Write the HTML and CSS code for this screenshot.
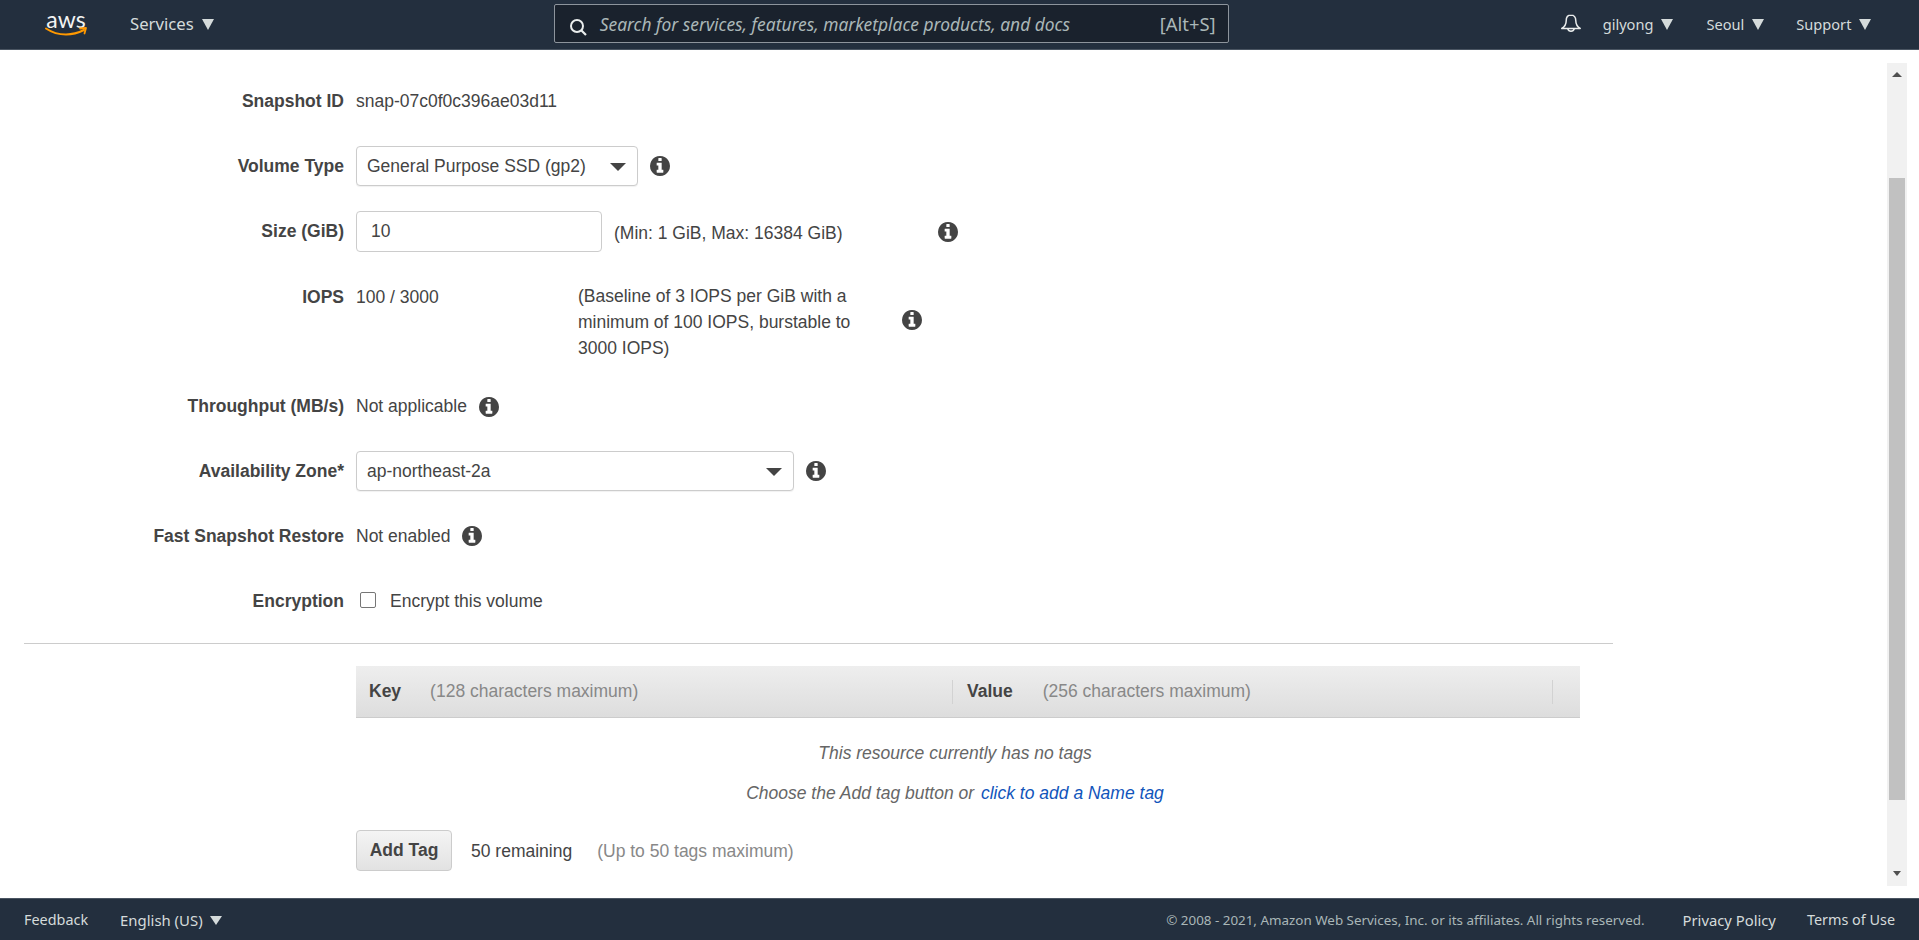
FILE: index.html
```html
<!DOCTYPE html>
<html lang="en">
<head>
<meta charset="utf-8">
<title>Create Volume</title>
<link rel="stylesheet" href="styles.css">
</head>
<body>
<svg class="defs" width="0" height="0" aria-hidden="true"><symbol id="info" viewBox="0 0 1536 1536"><path d="M1024 1248v-160q0-14-9-23t-23-9h-96v-512q0-14-9-23t-23-9h-320q-14 0-23 9t-9 23v160q0 14 9 23t23 9h96v320h-96q-14 0-23 9t-9 23v160q0 14 9 23t23 9h448q14 0 23-9t9-23zm-128-896v-160q0-14-9-23t-23-9h-192q-14 0-23 9t-9 23v160q0 14 9 23t23 9h192q14 0 23-9t9-23zm640 416q0 209-103 385.5t-279.5 279.5-385.5 103-385.5-103-279.5-279.5-103-385.5 103-385.5 279.5-279.5 385.5-103 385.5 103 279.5 279.5 103 385.5z"/></symbol></svg>
<div class="page">
  <header class="topbar">
    <div class="logo">
      <span class="logo-text">aws</span>
      <svg class="smile" viewBox="0 0 42 9" width="42" height="9"><path d="M1 1.500C7 5.500 13 7.500 21 7.500 27 7.500 33 6 39 3" fill="none" stroke="#f90" stroke-width="2" stroke-linecap="round"/><path d="M35 1.500L41 1 39.500 6.500" fill="none" stroke="#f90" stroke-width="1.800" stroke-linecap="round" stroke-linejoin="round"/></svg>
    </div>
    <div class="nav-item services">Services<i class="caret"></i></div>
    <div class="search">
      <svg class="search-icon" viewBox="0 0 18 18" width="18" height="18"><circle cx="8" cy="8" r="6" fill="none" stroke="#eaeded" stroke-width="2"/><path d="M12.500 12.500L17 17" stroke="#eaeded" stroke-width="2.200"/></svg>
      <span class="search-text">Search for services, features, marketplace products, and docs</span>
      <span class="search-key">[Alt+S]</span>
    </div>
    <svg class="bell" viewBox="0 0 20 20" width="20" height="20"><path d="M10 1C6.800 1 5.200 3.500 5.200 6.700c0 3.400-1.500 6-4.400 7.800h18.400c-2.900-1.800-4.400-4.400-4.400-7.800C14.800 3.500 13.200 1 10 1z" fill="none" stroke="#eaeded" stroke-width="1.500" stroke-linejoin="round"/><path d="M6.800 14.800a3.300 3.300 0 0 0 6.400 0" fill="none" stroke="#eaeded" stroke-width="1.500"/></svg>
    <div class="nav-item user">gilyong<i class="caret"></i></div>
    <div class="nav-item region">Seoul<i class="caret"></i></div>
    <div class="nav-item support">Support<i class="caret"></i></div>
  </header>

  <main class="main">
    <div class="content">
      <div class="row row-a">
        <div class="label">Snapshot ID</div>
        <div class="value">snap-07c0f0c396ae03d11</div>
      </div>
      <div class="row">
        <div class="label">Volume Type</div>
        <div class="select select-type"><span>General Purpose SSD (gp2)</span><i class="select-caret"></i></div>
        <svg class="info info-type"><use href="#info"/></svg>
      </div>
      <div class="row row-size">
        <div class="label">Size (GiB)</div>
        <div class="input">10</div>
        <div class="value size-note">(Min: 1 GiB, Max: 16384 GiB)</div>
        <svg class="info info-size"><use href="#info"/></svg>
      </div>
      <div class="row row-iops">
        <div class="label">IOPS</div>
        <div class="value iops-val">100 / 3000</div>
        <div class="value iops-note">(Baseline of 3 IOPS per GiB with a minimum of 100 IOPS, burstable to 3000 IOPS)</div>
        <svg class="info info-iops"><use href="#info"/></svg>
      </div>
      <div class="row row-thr">
        <div class="label">Throughput (MB/s)</div>
        <div class="value">Not applicable</div>
        <svg class="info info-near"><use href="#info"/></svg>
      </div>
      <div class="row row-az">
        <div class="label">Availability Zone*</div>
        <div class="select select-az"><span>ap-northeast-2a</span><i class="select-caret"></i></div>
        <svg class="info info-type"><use href="#info"/></svg>
      </div>
      <div class="row row-fast">
        <div class="label">Fast Snapshot Restore</div>
        <div class="value">Not enabled</div>
        <svg class="info info-near"><use href="#info"/></svg>
      </div>
      <div class="row row-enc">
        <div class="label">Encryption</div>
        <i class="checkbox"></i>
        <div class="value">Encrypt this volume</div>
      </div>
      <hr class="divider">
      <div class="tags">
        <div class="tag-head">
          <div class="tag-col tag-key"><b>Key</b><span>(128 characters maximum)</span></div>
          <div class="tag-col tag-value"><b>Value</b><span>(256 characters maximum)</span></div>
        </div>
        <p class="empty empty-1">This resource currently has no tags</p>
        <p class="empty empty-2">Choose the Add tag button or <a href="#">click to add a Name tag</a></p>
        <div class="tag-actions">
          <button class="add-tag" type="button">Add Tag</button>
          <span class="remaining">50 remaining</span>
          <span class="max">(Up to 50 tags maximum)</span>
        </div>
      </div>
    </div>
    <div class="scrollbar">
      <i class="arrow-up"></i>
      <div class="thumb"></div>
      <i class="arrow-down"></i>
    </div>
  </main>

  <footer class="footer">
    <span class="foot-feedback">Feedback</span>
    <span class="foot-lang">English (US)<i class="caret caret-small"></i></span>
    <span class="copyright">© 2008 - 2021, Amazon Web Services, Inc. or its affiliates. All rights reserved.</span>
    <span class="foot-link foot-privacy">Privacy Policy</span>
    <span class="foot-link foot-terms">Terms of Use</span>
  </footer>
</div>
</body>
</html>
```

FILE: styles.css
```css
* { box-sizing: border-box; }
html, body { margin: 0; height: 100%; overflow: hidden; }
body { font-family: "Liberation Sans", Arial, sans-serif; font-size: 17.5px; color: #444; background: #fff; }
.defs { display: block; height: 0; }
.page { height: 940px; display: flex; flex-direction: column; }

.topbar { height: 50px; flex: none; background: #232f3e; border-bottom: 1px solid #4a5562; display: flex; align-items: center; color: #d5dbdb; font-family: "Noto Sans", sans-serif; font-size: 14.6px; padding-left: 45px; }
.logo { width: 42px; height: 34px; display: flex; flex-direction: column; align-items: center; margin-top: -2px; }
.logo-text { font-family: "Lato", sans-serif; font-size: 23px; line-height: 22px; color: #f2f3f3; height: 19px; margin-top: 1px; }
.smile { display: block; }
.nav-item { display: flex; align-items: center; white-space: nowrap; margin-top: -2px; }
.caret { display: block; width: 0; height: 0; border-left: 6.5px solid transparent; border-right: 6.5px solid transparent; border-top: 11px solid #d5dbdb; margin: 2px 0 0 8px; }
.services { margin-left: 43px; font-size: 16.7px; }
.search { width: 675px; height: 39px; margin-left: 340px; margin-top: -2px; background: #1a222d; border: 1px solid #8d949c; border-radius: 2px; display: flex; align-items: center; padding: 0 12px 0 14px; color: #aab7b8; font-size: 17.4px; }
.search-icon { flex: none; margin-top: 6px; }
.search-text { font-style: italic; margin-left: 13px; flex: 1; }
.search-key { white-space: nowrap; font-size: 18.4px; }
.bell { flex: none; margin-left: 332px; margin-top: -2px; }
.user { margin-left: 22px; }
.region { margin-left: 33px; }
.support { margin-left: 32px; }

.main { flex: 1; display: flex; min-height: 0; padding: 13px 12px 12px 0; }
.content { flex: 1; min-width: 0; padding: 18px 0 0 24px; }
.row { display: flex; align-items: center; height: 40px; margin-bottom: 25px; }
.label { width: 320px; flex: none; text-align: right; font-weight: 700; color: #444; white-space: nowrap; margin-right: 12px; }
.value { white-space: nowrap; color: #444; }
.select { height: 40px; background: #fff; border: 1px solid #ccc; border-radius: 4px; display: flex; align-items: center; justify-content: space-between; padding: 0 11px 0 10px; color: #444; box-shadow: 0 1px 1px rgba(0,0,0,.06); }
.select-type { width: 282px; }
.select-az { width: 438px; }
.select-caret { width: 0; height: 0; border-left: 8px solid transparent; border-right: 8px solid transparent; border-top: 8px solid #444; margin-top: 2px; }
.input { width: 246px; height: 41px; border: 1px solid #ccc; border-radius: 4px; padding: 0 14px; display: flex; align-items: center; color: #444; }
.info { width: 20px; height: 20px; fill: #444; flex: none; }
.info-type { margin-left: 12px; }
.info-near { margin-left: 12px; }
.size-note { margin-left: 12px; margin-top: 3px; }
.info-size { margin-left: 95px; }
.row-size { height: 41px; }
.row-iops { height: 85px; align-items: flex-start; padding-top: 7px; }
.iops-val { width: 222px; }
.iops-note { width: 290px; line-height: 26px; white-space: normal; margin-top: -1px; }
.info-iops { margin-left: 34px; margin-top: 26px; }
.row-thr { height: 39px; }
.row-fast { margin-top: 1px; }
.row-iops .label { line-height: 26px; }
.iops-val { line-height: 26px; }
.checkbox { width: 16px; height: 16px; border: 1px solid #767676; border-radius: 2px; margin: -3px 14px 0 4px; background: #fff; flex: none; }
.divider { border: 0; border-top: 1px solid #ccc; margin: 0; width: 1589px; }
.row-enc { margin-bottom: 22px; }
.tags { margin: 22px 0 0 332px; width: 1224px; }
.tag-head { height: 52px; display: flex; align-items: center; background: linear-gradient(#eee, #ddd); border-bottom: 1px solid #ccc; }
.tag-col { display: flex; align-items: center; height: 24px; }
.tag-col b { color: #444; }
.tag-col span { color: #888; }
.tag-key { width: 597px; padding-left: 13px; border-right: 1px solid #d2d2d2; }
.tag-key span { margin-left: 29px; }
.tag-value { width: 600px; padding-left: 14px; border-right: 1px solid #d2d2d2; }
.tag-value span { margin-left: 30px; }
.empty { margin: 0; width: 1198px; text-align: center; font-style: italic; color: #666; line-height: 24px; }
.empty a { color: #15b; text-decoration: none; margin-left: 2px; }
.empty-1 { margin-top: 23px; }
.empty-2 { margin-top: 16px; }
.tag-actions { display: flex; align-items: center; margin-top: 25px; }
.add-tag { width: 96px; height: 41px; border: 1px solid #ccc; border-radius: 4px; background: linear-gradient(#f4f4f4, #e2e2e2); font: 700 17.5px "Liberation Sans", Arial, sans-serif; color: #444; padding: 0; }
.remaining { margin: 2px 0 0 19px; color: #444; }
.max { margin: 2px 0 0 25px; color: #888; }

.scrollbar { flex: none; width: 20px; background: #f1f1f1; display: flex; flex-direction: column; align-items: center; }
.arrow-up { width: 0; height: 0; border-left: 5px solid transparent; border-right: 5px solid transparent; border-bottom: 5px solid #505050; margin-top: 9px; }
.thumb { width: 16px; height: 622px; background: #c1c1c1; margin-top: 101px; }
.arrow-down { width: 0; height: 0; border-left: 4px solid transparent; border-right: 4px solid transparent; border-top: 5px solid #505050; margin-top: 71px; }

.footer { height: 42px; flex: none; background: #232f3e; border-top: 1px solid #4a5562; display: flex; align-items: center; color: #d5dbdb; font-family: "Noto Sans", sans-serif; font-size: 14.4px; padding-left: 24px; white-space: nowrap; }
.foot-lang { display: flex; align-items: center; margin-left: 32px; font-size: 14.9px; }
.caret-small { border-left-width: 6px; border-right-width: 6px; border-top-width: 9px; margin: 2px 0 0 7px; }
.copyright { margin-left: auto; font-size: 13.4px; color: #aab7b8; }
.foot-privacy { margin-left: 38px; font-size: 14.8px; }
.foot-terms { margin-left: 31px; margin-right: 24px; }
```
